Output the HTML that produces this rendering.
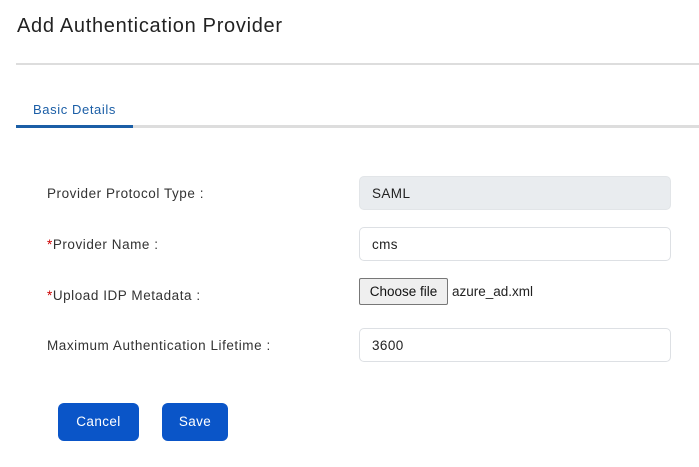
<!DOCTYPE html>
<html><head><style>
body{margin:0;width:699px;height:467px;background:#fff;font-family:"Liberation Sans",sans-serif;position:relative;overflow:hidden;color:#333}
.a{position:absolute}
h1{position:absolute;left:17px;top:15px;margin:0;font-size:20px;letter-spacing:0.7px;font-weight:normal;color:#222}
.lbl{position:absolute;left:47px;font-size:13.5px;letter-spacing:0.55px;color:#333}
.lbl b{color:#c00;font-weight:normal}
.in{position:absolute;left:359px;width:310px;height:32px;border:1px solid #dde0e4;border-radius:5px;font-size:13.5px;letter-spacing:0.4px;line-height:33px;box-sizing:content-box;text-indent:12px;color:#222}
.btn{position:absolute;top:403px;height:38px;background:#0a55c8;color:#fff;border-radius:6px;font-size:13.5px;letter-spacing:0.4px;line-height:38px;text-align:center}
</style></head><body>
<h1>Add Authentication Provider</h1>
<div class="a" style="left:16px;top:63px;width:683px;height:2px;background:#ddd"></div>
<div class="a" style="left:33px;top:102px;font-size:13px;letter-spacing:0.6px;color:#1b5ea6">Basic Details</div>
<div class="a" style="left:16px;top:125px;width:683px;height:3px;background:#ddd"></div>
<div class="a" style="left:16px;top:125px;width:117px;height:3px;background:#1b5ea6"></div>
<div class="lbl" style="top:186px">Provider Protocol Type :</div>
<div class="lbl" style="top:237px"><b>*</b>Provider Name :</div>
<div class="lbl" style="top:288px"><b>*</b>Upload IDP Metadata :</div>
<div class="lbl" style="top:338px">Maximum Authentication Lifetime :</div>
<div class="in" style="top:176px;background:#e9ecef;border-color:#e2e5e8">SAML</div>
<div class="in" style="top:227px">cms</div>
<div class="a" style="left:359px;top:278px;width:87px;height:25px;border:1px solid #777;border-radius:2px;background:#efefef;font-size:13.5px;line-height:25px;text-align:center;color:#111">Choose file</div>
<div class="a" style="left:452px;top:284px;font-size:13.5px;color:#222">azure_ad.xml</div>
<div class="in" style="top:328px">3600</div>
<div class="btn" style="left:58px;width:81px">Cancel</div>
<div class="btn" style="left:162px;width:66px">Save</div>
</body></html>
